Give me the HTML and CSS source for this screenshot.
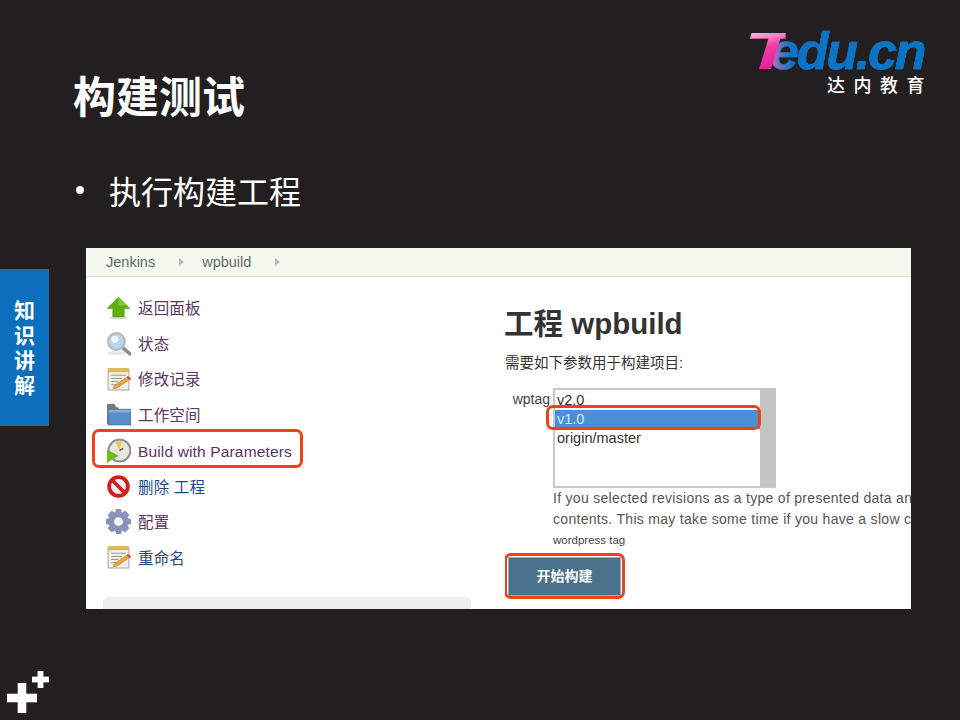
FILE: index.html
```html
<!DOCTYPE html>
<html lang="zh-CN">
<head>
  <meta charset="UTF-8" />
  <title>构建测试</title>
  <link rel="stylesheet" href="styles.css">
</head>
<body>

<div class="slide">
  <header class="top">
    <h1 class="title">构建测试</h1>
    <div class="logo">
      <div class="logo-word"><span class="logo-t">T</span><span class="logo-edu">edu.cn</span></div>
      <div class="logo-cn">达内教育</div>
    </div>
  </header>

  <div class="bullet"><span class="dot"></span><span>执行构建工程</span></div>

  <div class="stage">
    <div class="tab">知<br>识<br>讲<br>解</div>

    <div class="window">
      <div class="crumbs">
        <span>Jenkins</span><i class="arrow"></i>
        <span>wpbuild</span><i class="arrow"></i>
      </div>

      <div class="columns">
        <nav class="side">
          <a class="task">
            <svg viewBox="0 0 24 24" class="icon"><ellipse cx="12" cy="22" rx="9" ry="1.500" fill="#ddd"/><path d="M12 2 23 13H17.500V21H6.500V13H1Z" fill="#5fb00e" stroke="#4d960a" stroke-width=".5"/><path d="M12 2 20 10H12Z" fill="#9bdc45" opacity=".6"/></svg>
            <span>返回面板</span>
          </a>
          <a class="task">
            <svg viewBox="0 0 24 24" class="icon"><ellipse cx="10" cy="21" rx="9" ry="1.800" fill="#e4e4e4"/><path d="M15 15 23 22" stroke="#8b8d90" stroke-width="3.400" stroke-linecap="round"/><circle cx="10" cy="10" r="8" fill="#bcd6f2" stroke="#b4bac0" stroke-width="2.200"/><circle cx="8.500" cy="8" r="3.500" fill="#eef6fd"/></svg>
            <span>状态</span>
          </a>
          <a class="task">
            <svg viewBox="0 0 24 24" class="icon"><use href="#note"/></svg>
            <span>修改记录</span>
          </a>
          <a class="task">
            <svg viewBox="0 0 24 24" class="icon"><path d="M1 2H8L10 5H12V21H1Z" fill="#77797c"/><path d="M2 7H24V22H2Z" fill="#5b8ec9" stroke="#3d6ea8" stroke-width=".8"/><path d="M2.500 7.500H23.500V10H2.500Z" fill="#86aedc"/></svg>
            <span>工作空间</span>
          </a>
          <a class="task">
            <svg viewBox="0 0 24 24" class="icon"><circle cx="13" cy="12" r="10.500" fill="#e8e6da" stroke="#8c8f96" stroke-width="2"/><path d="M13 12 9 3 15 3Z" fill="#e6c84c"/><path d="M13 12 16.500 10" stroke="#444" stroke-width="1.200"/><path d="M1 11 12 17 1 24Z" fill="#6dbb1c"/></svg>
            <span>Build with Parameters</span>
          </a>
          <a class="task link">
            <svg viewBox="0 0 24 24" class="icon"><circle cx="12" cy="12" r="9" fill="#f4f1f0" stroke="#d21e1e" stroke-width="3.600"/><path d="M6 6 18 18" stroke="#d21e1e" stroke-width="3.600"/></svg>
            <span>删除 工程</span>
          </a>
          <a class="task">
            <svg viewBox="0 0 24 24" class="icon"><path d="M10 0H14L15 4 18.500 2 22 5.500 20 9 24 10V14L20 15 22 18.500 18.500 22 15 20 14 24H10L9 20 5.500 22 2 18.500 4 15 0 14V10L4 9 2 5.500 5.500 2 9 4Z" fill="#8b90bd" stroke="#74789f" stroke-width=".5"/><circle cx="12" cy="12" r="4.200" fill="#fff"/></svg>
            <span>配置</span>
          </a>
          <a class="task link">
            <svg viewBox="0 0 24 24" class="icon"><use href="#note"/></svg>
            <span>重命名</span>
          </a>
          <div class="side-panel"></div>
          <div class="mark mark-build"></div>
        </nav>

        <main class="main">
          <h2 class="heading">工程 wpbuild</h2>
          <p class="intro">需要如下参数用于构建项目:</p>

          <div class="param">
            <label class="param-name">wptag</label>
            <div class="listbox">
              <div class="options">
                <div class="opt">v2.0</div>
                <div class="opt opt-on">v1.0</div>
                <div class="opt">origin/master</div>
              </div>
              <div class="scroll"></div>
            </div>
            <div class="mark mark-opt"></div>
          </div>

          <div class="desc">If you selected revisions as a type of presented data an</div>
          <div class="desc">contents. This may take some time if you have a slow c</div>
          <div class="hint">wordpress tag</div>

          <div class="submit">
            <button class="go" type="button">开始构建</button>
            <div class="mark mark-go"></div>
          </div>
        </main>
      </div>
    </div>
  </div>

  <svg class="plus" viewBox="0 0 42 43">
    <rect x="10.700" y="13" width="8.600" height="30" fill="#fff"/>
    <rect x="0" y="23.700" width="30" height="8.600" fill="#fff"/>
    <rect x="30.600" y="1" width="5.800" height="17" fill="#fff"/>
    <rect x="25" y="6.600" width="17" height="5.800" fill="#fff"/>
  </svg>
</div>

<svg width="0" height="0" class="defs">
  <symbol id="note" viewBox="0 0 24 24">
    <path d="M2 3H22V22H2Z" fill="#f2f0e6" stroke="#a8a8a0" stroke-width="1"/>
    <path d="M2 1H22V5H2Z" fill="#d9b95a"/>
    <path d="M5 8H19M5 11H15M5 14H12M5 17H10" stroke="#9a9a94" stroke-width="1"/>
    <path d="M8 18 21 9 24 11 11 20 7 21Z" fill="#eba63b" stroke="#a8701f" stroke-width=".5"/>
    <path d="M21 9 24 11 23 12.500 20 10Z" fill="#d93a2a"/>
  </symbol>
</svg>

</body>
</html>
```

FILE: styles.css
```css
html, body { margin: 0; padding: 0; }
body { background: #231f20; font-family: "Liberation Sans", "Noto Sans CJK SC", sans-serif; }
.slide { width: 960px; height: 720px; overflow: hidden; color: #fff; }
.defs { position: absolute; }

.top { display: flex; justify-content: space-between; align-items: flex-start; height: 122px; padding: 0 35px 0 73px; }
.title { margin: 68px 0 0; font: bold 43px/52px "Noto Sans CJK SC", sans-serif; }
.logo { margin-top: 26px; width: 176px; }
.logo-word { font: italic bold 52px/50px "Liberation Sans", sans-serif; white-space: nowrap; }
.logo-t { display: inline-block; width: 26px; margin-left: -5px; transform: scaleX(1.600); transform-origin: left; background: linear-gradient(160deg, #fde0f2 5%, #f23aa8 45%, #e0128a 100%); -webkit-background-clip: text; background-clip: text; color: transparent; }
.logo-edu { letter-spacing: -2.200px; -webkit-text-stroke: .6px currentColor; background: linear-gradient(90deg, #d868b0 0%, #0b74c4 14%); -webkit-background-clip: text; background-clip: text; color: #0b74c4; -webkit-text-fill-color: transparent; }
.logo-cn { margin: -3px -8px 0 0; text-align: right; font: 500 18px/22px "Noto Sans CJK SC", sans-serif; letter-spacing: 8.500px; white-space: nowrap; }

.bullet { display: flex; align-items: center; height: 48px; margin-top: 44px; padding-left: 76px; font: 32px/48px "Noto Sans CJK SC", sans-serif; }
.dot { width: 8px; height: 8px; margin-right: 25px; background: #fff; border-radius: 50%; }

.stage { display: flex; align-items: flex-start; margin-top: 34px; }
.tab { width: 49px; height: 157px; margin-top: 21px; box-sizing: border-box; padding-top: 28px; background: #0b6fbe; text-align: center; font: bold 21px/25px "Noto Sans CJK SC", sans-serif; }

.window { width: 825px; height: 361px; margin-left: 37px; overflow: hidden; background: #fff; color: #333; }
.crumbs { display: flex; align-items: center; height: 28px; padding-left: 20px; background: #f3f9ee; border-bottom: 1px solid #d9ddd5; font-size: 14.500px; color: #666; }
.arrow { width: 0; height: 0; margin: 0 18px 0 24px; border-left: 5px solid #b5b8b5; border-top: 4px solid transparent; border-bottom: 4px solid transparent; }

.columns { display: flex; }
.side { position: relative; width: 419px; padding-top: 13px; box-sizing: border-box; }
.task { display: flex; align-items: center; height: 35.700px; padding-left: 20px; font-size: 15.500px; letter-spacing: .15px; line-height: 1; color: #5c3566; }
.task.link { color: #204a87; }
.task span { margin-top: 2px; white-space: nowrap; }
.icon { width: 25px; height: 25px; margin-right: 7px; flex: none; }
.side-panel { width: 368px; height: 30px; margin: 21px 0 0 17px; background: #eeeeee; border-radius: 6px 6px 0 0; }

.mark { position: absolute; box-sizing: border-box; border: 3px solid #f4410f; border-radius: 7px; }
.mark-build { left: 6px; top: 152px; width: 211px; height: 39px; }
.mark-opt { left: 41px; top: 17px; width: 215px; height: 25px; }
.mark-go { left: -4px; top: -4px; width: 121px; height: 46px; }

.main { width: 406px; overflow: hidden; white-space: nowrap; }
.heading { margin: 29px 0 0 -1px; font: bold 29.500px/36px "Liberation Sans", "Noto Sans CJK SC", sans-serif; color: #333; }
.intro { margin: 11px 0 0; font-size: 14.500px; line-height: 20px; color: #333; }

.param { position: relative; display: flex; margin-top: 15px; }
.param-name { width: 45px; margin-right: 3px; padding-top: 3px; text-align: right; font-size: 14px; color: #444; }
.listbox { display: flex; width: 223px; height: 100px; box-sizing: border-box; border: 2px solid #c8c8c8; background: #fff; }
.options { flex: 1; padding-top: 1px; font-size: 14.500px; line-height: 19px; color: #333; }
.opt { height: 19px; padding-left: 2px; }
.opt-on { background: #4a90d9; color: #dbe8f6; }
.scroll { width: 16px; margin-right: -2px; background: #c3c5c3; }

.desc { margin-left: 48px; font-size: 14px; line-height: 21px; letter-spacing: .3px; color: #555; }
.hint { margin-left: 48px; font-size: 11.500px; line-height: 20px; color: #444; }

.submit { position: relative; margin: 7px 0 0 3px; }
.go { display: block; width: 113px; height: 39px; padding: 0 0 3px; border: 1px solid #8fb0c4; background: #4a728a; color: #fff; font: bold 14px "Noto Sans CJK SC", sans-serif; }

.plus { display: block; width: 42px; height: 43px; margin: 61px 0 0 7px; }
```
